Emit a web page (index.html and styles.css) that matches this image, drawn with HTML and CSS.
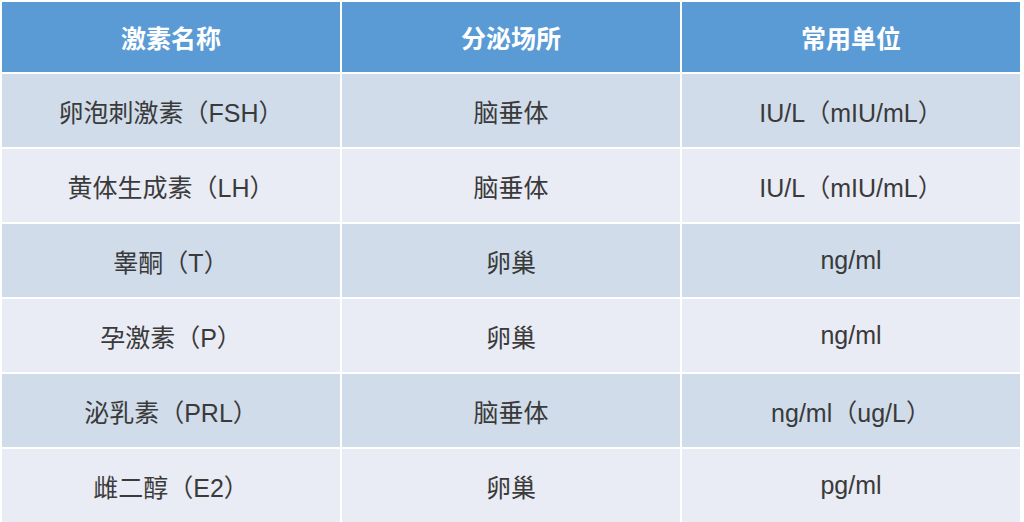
FILE: index.html
```html
<!DOCTYPE html>
<html lang="zh-CN">
<head>
<meta charset="utf-8">
<link rel="stylesheet" href="styles.css">
</head>
<body>
<div class="table">
  <div class="cell head">激素名称</div>
  <div class="cell head">分泌场所</div>
  <div class="cell head">常用单位</div>

  <div class="cell odd">卵泡刺激素（FSH）</div>
  <div class="cell odd">脑垂体</div>
  <div class="cell odd">IU/L（mIU/mL）</div>

  <div class="cell even">黄体生成素（LH）</div>
  <div class="cell even">脑垂体</div>
  <div class="cell even">IU/L（mIU/mL）</div>

  <div class="cell odd">睾酮（T）</div>
  <div class="cell odd">卵巢</div>
  <div class="cell odd">ng/ml</div>

  <div class="cell even">孕激素（P）</div>
  <div class="cell even">卵巢</div>
  <div class="cell even">ng/ml</div>

  <div class="cell odd">泌乳素（PRL）</div>
  <div class="cell odd">脑垂体</div>
  <div class="cell odd">ng/ml（ug/L）</div>

  <div class="cell even">雌二醇（E2）</div>
  <div class="cell even">卵巢</div>
  <div class="cell even">pg/ml</div>
</div>
</body>
</html>
```

FILE: styles.css
```css
html, body {
  margin: 0;
  padding: 0;
  background: #ffffff;
}
body {
  width: 1024px;
  height: 522px;
  overflow: hidden;
  font-family: "Liberation Sans", "Noto Sans CJK SC", sans-serif;
}
.table {
  display: grid;
  grid-template-columns: 338px 338px 338px;
  grid-template-rows: 70px repeat(6, 73px);
  gap: 2px;
  padding: 2px 0 0 2px;
}
.cell {
  display: flex;
  align-items: center;
  justify-content: center;
  font-size: 25px;
  color: #3a3a3a;
  white-space: nowrap;
}
.head {
  background: #5b9bd5;
  color: #ffffff;
  font-weight: bold;
  font-size: 25px;
}
.odd {
  background: #d0dcea;
}
.even {
  background: #e9ebf5;
}
```
